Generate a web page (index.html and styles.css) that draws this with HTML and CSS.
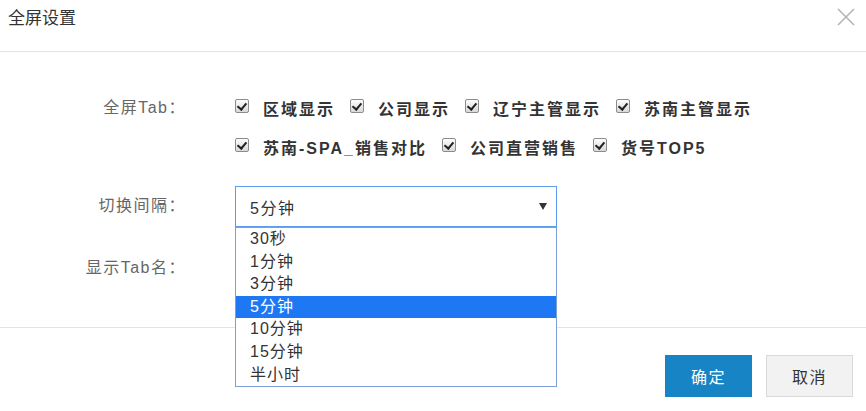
FILE: index.html
```html
<!DOCTYPE html>
<html lang="zh-CN">
<head>
  <meta charset="UTF-8" />
  <title>全屏设置</title>
  <link rel="stylesheet" href="styles.css">
</head>
<body>
  <div class="dialog">
    <div class="dialog-header">
      <span class="dialog-title">全屏设置</span>
      <span class="close">
        <svg width="20" height="20" viewBox="0 0 20 20"><path d="M2 2 L18 18 M18 2 L2 18" stroke="#b4b4b4" stroke-width="1.6" fill="none"/></svg>
      </span>
    </div>

    <div class="dialog-body">
      <div class="form-row">
        <label class="form-label">全屏Tab：</label>
        <div class="form-field checks">
          <span class="check-item"><span class="check"></span>区域显示</span>
          <span class="check-item"><span class="check"></span>公司显示</span>
          <span class="check-item"><span class="check"></span>辽宁主管显示</span>
          <span class="check-item"><span class="check"></span>苏南主管显示</span>
          <span class="check-item"><span class="check"></span>苏南-SPA_销售对比</span>
          <span class="check-item"><span class="check"></span>公司直营销售</span>
          <span class="check-item"><span class="check"></span>货号TOP5</span>
        </div>
      </div>

      <div class="form-row row-select">
        <label class="form-label">切换间隔：</label>
        <div class="form-field select-wrap">
          <div class="select">
            <span>5分钟</span>
            <span class="caret"></span>
          </div>
          <ul class="options">
            <li>30秒</li>
            <li>1分钟</li>
            <li>3分钟</li>
            <li class="selected">5分钟</li>
            <li>10分钟</li>
            <li>15分钟</li>
            <li>半小时</li>
          </ul>
        </div>
      </div>

      <div class="form-row row-name">
        <label class="form-label">显示Tab名：</label>
        <div class="form-field"></div>
      </div>
    </div>

    <div class="dialog-footer">
      <button class="btn btn-primary">确定</button>
      <button class="btn btn-default">取消</button>
    </div>
  </div>
</body>
</html>
```

FILE: styles.css
```css
body {
  margin: 0;
  font-family: "Liberation Sans", "Noto Sans CJK SC", sans-serif;
  color: #333;
  background: #fff;
}

.dialog {
  width: 866px;
  height: 411px;
  overflow: hidden;
}

.dialog-header {
  height: 51px;
  border-bottom: 1px solid #e3e3e3;
  display: flex;
  align-items: flex-start;
  justify-content: space-between;
  padding: 0 10px 0 8px;
}

.dialog-title {
  font-size: 17px;
  line-height: 38px;
  color: #333;
}

.close {
  margin-top: 7px;
  display: flex;
}

.dialog-body {
  height: 276px;
  padding-top: 36px;
  box-sizing: border-box;
  border-bottom: 1px solid #e3e3e3;
}

.form-row {
  display: flex;
  align-items: flex-start;
}

.form-label {
  width: 186px;
  padding-right: 4px;
  flex-shrink: 0;
  text-align: right;
  font-size: 16px;
  letter-spacing: 1.5px;
  color: #666;
  line-height: 40px;
}

.form-field {
  margin-left: 45px;
  flex: 1;
}

.checks {
  display: flex;
  flex-wrap: wrap;
  width: 540px;
  flex: none;
}

.check-item {
  display: inline-flex;
  align-items: center;
  height: 39px;
  margin-right: 15px;
  font-size: 16px;
  font-weight: bold;
  letter-spacing: 2px;
  color: #333;
}

.check {
  width: 12px;
  height: 12px;
  border: 1px solid #8c8c8c;
  border-radius: 2px;
  background: linear-gradient(#fdfdfd, #d9d9d9);
  margin-right: 14px;
  position: relative;
  top: -2px;
}

.check::after {
  content: "";
  position: absolute;
  left: 3px;
  top: 1px;
  width: 4px;
  height: 7px;
  border: solid #222;
  border-width: 0 2px 2px 0;
  transform: rotate(40deg);
}

.row-select {
  margin-top: 20px;
}

.select-wrap {
  position: relative;
  width: 322px;
  flex: none;
}

.select {
  height: 39px;
  border: 1px solid #5d9cec;
  display: flex;
  align-items: center;
  justify-content: space-between;
  padding: 0 9px 0 14px;
  font-size: 16px;
  letter-spacing: 1.5px;
  color: #333;
}

.caret {
  width: 0;
  height: 0;
  border-left: 4px solid transparent;
  border-right: 4px solid transparent;
  border-top: 7px solid #333;
}

.options {
  position: absolute;
  left: 0;
  right: 0;
  top: 41px;
  margin: 0;
  padding: 0;
  list-style: none;
  background: #fff;
  border: 1px solid #7d9fd4;
  z-index: 5;
}

.options li {
  height: 22.6px;
  line-height: 22.6px;
  padding-left: 14px;
  font-size: 16px;
  letter-spacing: 1px;
  color: #333;
}

.options li.selected {
  background: #1e77f3;
  color: #fff;
}

.row-name {
  margin-top: 21px;
}

.dialog-footer {
  display: flex;
  justify-content: flex-end;
  gap: 14px;
  padding: 27px 13px 0 0;
}

.btn {
  width: 87px;
  height: 42px;
  font-family: inherit;
  font-size: 16px;
  letter-spacing: 1.5px;
  cursor: pointer;
}

.btn-primary {
  background: #1784c5;
  border: 1px solid #1784c5;
  color: #fff;
}

.btn-default {
  background: #f2f2f2;
  border: 1px solid #d9d9d9;
  color: #333;
}
```
